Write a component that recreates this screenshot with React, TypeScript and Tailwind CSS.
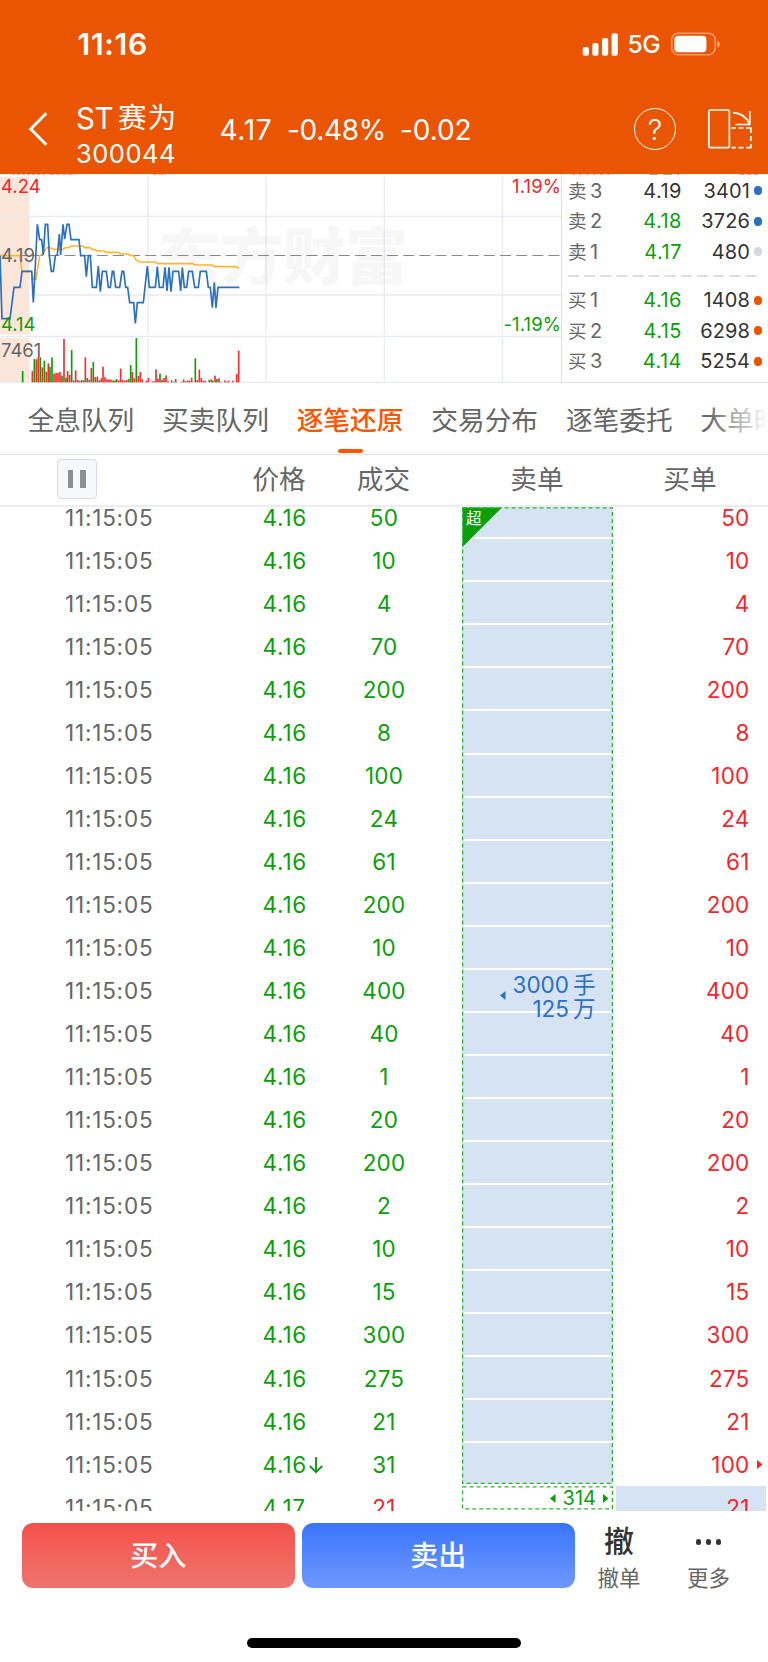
import React from 'react';

const FONT = "font-['Inter','Noto_Sans_CJK_SC',sans-serif]";

const PRICE_LINE =
  '0,272 6,461 30,461 42,367 60,367 66,319 95,319 100,412 106,300 112,178 119,224 125,224 130,270 136,178 143,178 148,272 154,319 160,319 166,272 172,270 178,207 182,270 189,178 194,222 201,178 207,178 213,224 237,224 242,272 254,272 259,335 265,272 271,272 277,367 289,367 295,303 301,380 307,319 319,319 325,367 331,367 337,319 341,319 347,367 359,367 366,319 371,319 377,367 383,367 389,413 401,413 406,475 412,413 430,413 442,303 448,367 466,367 472,305 478,367 489,367 495,307 501,378 507,307 513,380 519,319 536,319 542,378 547,308 553,367 560,367 566,319 577,319 584,367 595,367 601,319 619,319 625,367 631,367 637,428 643,352 648,428 654,367 718,367';

const AVG_LINE =
  '0,272 60,272 66,319 95,319 101,343 108,343 119,272 128,266 142,247 154,249 160,253 190,253 196,248 207,247 213,243 248,243 254,248 270,248 277,253 284,254 290,258 313,258 319,262 354,262 360,266 384,267 390,271 401,272 408,285 419,291 466,291 472,296 578,296 585,300 637,300 643,305 707,305 717,310';

type Bar = [number, number, 'r' | 'g'];
const BARS: Bar[] = [
  [68, 618, 'g'], [97, 618, 'r'], [103, 582, 'g'], [109, 583, 'r'], [115, 576, 'r'], [121, 577, 'g'],
  [127, 607, 'r'], [133, 587, 'g'], [139, 620, 'r'], [145, 595, 'r'], [150, 606, 'g'], [156, 577, 'g'],
  [162, 626, 'r'], [168, 624, 'r'], [174, 624, 'r'], [180, 621, 'r'], [186, 632, 'g'], [192, 522, 'r'],
  [198, 638, 'g'], [203, 618, 'r'], [209, 630, 'r'], [215, 555, 'g'], [221, 646, 'r'], [227, 616, 'r'],
  [233, 645, 'r'], [239, 647, 'r'], [245, 645, 'g'], [251, 646, 'r'], [256, 577, 'r'], [262, 639, 'g'],
  [268, 644, 'r'], [274, 609, 'r'], [280, 591, 'g'], [286, 636, 'r'], [292, 635, 'r'], [298, 646, 'g'],
  [304, 640, 'r'], [309, 605, 'r'], [315, 637, 'r'], [321, 643, 'r'], [327, 643, 'r'], [333, 644, 'r'],
  [339, 646, 'g'], [345, 646, 'r'], [350, 642, 'g'], [356, 646, 'r'], [362, 611, 'r'], [368, 645, 'r'],
  [374, 647, 'r'], [380, 645, 'r'], [386, 642, 'g'], [392, 600, 'g'], [397, 621, 'r'], [403, 640, 'r'],
  [409, 519, 'g'], [415, 633, 'r'], [421, 621, 'r'], [427, 643, 'r'], [439, 647, 'r'], [445, 639, 'r'],
  [457, 649, 'r'], [463, 649, 'r'], [468, 613, 'r'], [474, 641, 'r'], [480, 626, 'g'], [486, 644, 'r'],
  [492, 639, 'r'], [498, 631, 'r'], [504, 648, 'r'], [515, 646, 'g'], [521, 650, 'r'], [527, 642, 'r'],
  [545, 650, 'g'], [551, 643, 'r'], [557, 649, 'g'], [563, 646, 'r'], [569, 647, 'r'], [575, 638, 'r'],
  [586, 580, 'g'], [592, 645, 'r'], [598, 614, 'r'], [604, 639, 'r'], [610, 647, 'r'], [616, 647, 'r'],
  [628, 645, 'g'], [634, 643, 'r'], [639, 647, 'g'], [645, 632, 'r'], [651, 642, 'g'], [657, 640, 'r'],
  [663, 650, 'r'], [675, 646, 'r'], [681, 650, 'r'], [686, 647, 'r'], [698, 647, 'r'], [710, 627, 'r'],
  [716, 557, 'r'],
];

const ROWS: { qty: string; buy: string; price?: string; down?: boolean; arrow?: boolean; red?: boolean }[] = [
  { qty: '50', buy: '50' }, { qty: '10', buy: '10' }, { qty: '4', buy: '4' }, { qty: '70', buy: '70' },
  { qty: '200', buy: '200' }, { qty: '8', buy: '8' }, { qty: '100', buy: '100' }, { qty: '24', buy: '24' },
  { qty: '61', buy: '61' }, { qty: '200', buy: '200' }, { qty: '10', buy: '10' }, { qty: '400', buy: '400' },
  { qty: '40', buy: '40' }, { qty: '1', buy: '1' }, { qty: '20', buy: '20' }, { qty: '200', buy: '200' },
  { qty: '2', buy: '2' }, { qty: '10', buy: '10' }, { qty: '15', buy: '15' }, { qty: '300', buy: '300' },
  { qty: '275', buy: '275' }, { qty: '21', buy: '21' }, { qty: '31', buy: '100', down: true, arrow: true },
  { qty: '21', buy: '21', price: '4.17', red: true },
];

function StatusBar() {
  return (
    <div className="flex h-[87px] items-center justify-between pl-[77.500px] pr-[48.500px] text-white">
      <span className="text-[30px] font-semibold leading-none tracking-[0.700px]">11:16</span>
      <div className="flex items-center">
        <svg width="36" height="24" viewBox="0 0 36 24" fill="#fff">
          <rect x="0.7" y="15" width="6.2" height="8.7" rx="2" />
          <rect x="10.3" y="11" width="6.2" height="12.7" rx="2" />
          <rect x="20" y="6" width="6.2" height="17.7" rx="2" />
          <rect x="29.6" y="1.2" width="6.2" height="22.5" rx="2" />
        </svg>
        <span className="ml-[9.5px] w-[42px] pt-[2px] text-[24.5px] font-medium leading-none tracking-[-0.3px]">5G</span>
        <svg width="50" height="24" viewBox="0 0 50 24">
          <rect x="1.7" y="1.2" width="43.5" height="21.5" rx="6.5" fill="none" stroke="#fff" strokeOpacity="0.42" strokeWidth="1.5" />
          <rect x="4.4" y="3.7" width="32" height="16.6" rx="4" fill="#fff" />
          <path d="M47.3 8.700c3.2 1.2 3.2 6 0 7.2z" fill="#fff" fillOpacity="0.5" />
        </svg>
      </div>
    </div>
  );
}

function TitleBar() {
  return (
    <div className="flex h-[87px] items-start text-white">
      <svg className="mt-[23px] ml-[26px]" width="24" height="38" viewBox="0 0 24 38" fill="none" stroke="#fff" strokeWidth="3">
        <path d="M20.3 3.2 4.8 19l15.500 15.800" />
      </svg>
      <div className="ml-[26px] mt-[14px] w-[143.500px]">
        <div className="flex h-[35px] items-center gap-[5px] leading-none">
          <span className="text-[29.500px] tracking-[-0.500px]">ST</span>
          <span className="text-[28.500px] tracking-[1.200px]">赛为</span>
        </div>
        <div className="h-[35px] text-[25.5px] leading-[35px] tracking-[0.500px]">300044</div>
      </div>
      <div className="mt-[26px] flex h-[34px] items-center text-[28px] leading-none">
        <span className="w-[67.500px] tracking-[0.700px]">4.17</span>
        <span className="w-[113px] tracking-[-0.3px]">-0.48%</span>
        <span className="w-[100px] tracking-[-0.1px]">-0.02</span>
      </div>
      <div className="ml-auto mt-[21px] mr-[92px] flex size-[42px] shrink-0 items-center justify-center rounded-full border-[1.6px] border-white text-[29px] font-light leading-none">?</div>
      <svg className="absolute left-[706px] top-[107px]" width="48" height="44" viewBox="0 0 48 44" fill="none" stroke="#fff" strokeWidth="1.7">
        <rect x="2.8" y="3" width="20.600" height="37.600" rx="1.500" />
        <path d="M27 5.600c8 .4 13.500 4.400 16.500 11.300M43.800 4v13.600M29.300 17.500h15" />
        <path d="M25.500 21h4.500m2.500 0h5m2.500 0h4.800v5m0 3v5m0 3v3.700h-4.500m-2.700 0h-5m-2.600 0h-4.500" />
      </svg>
    </div>
  );
}

function Chart() {
  return (
    <div className="relative h-full w-[561px] shrink-0 overflow-hidden leading-none">
      <svg className="absolute inset-0" width="561" height="209" viewBox="0 174 561 209">
        <rect x="0" y="177" width="29.500" height="157.500" fill="#fce5d9" />
        <rect x="0" y="338" width="29.500" height="44.500" fill="#fce5d9" />
        <g stroke="#e7eaf1" strokeWidth="1.300">
          {[148, 266, 384.3, 502.5].map((x) => (
            <path key={x} d={`M${x} 177V334.500M${x} 338V382`} />
          ))}
          <path d="M0 216.300H561M0 295H561M0 336.500H561M0 382.500H561" />
        </g>
        <path d="M12 174.500h35" stroke="#bbb" strokeDasharray="3 2" />
        <path d="M50 174.500h25M153 174.500h13" stroke="#f9a9a0" strokeDasharray="4 2" />
      </svg>
      <div className="absolute left-[158px] top-[52px] whitespace-nowrap text-[62.500px] font-black text-[#777777]/[0.06]">东方财富</div>
      <svg className="absolute inset-0" width="561" height="209" viewBox="0 174 561 209">
        <path d="M0 255.500H561" stroke="#888" strokeWidth="1.200" strokeDasharray="11 5.130" />
        <g transform="translate(0 165) scale(0.33333)" fill="none" strokeWidth="5" strokeLinejoin="miter">
          <polyline points={AVG_LINE} stroke="#fdb62f" />
          <polyline points={PRICE_LINE} stroke="#2b70c1" strokeMiterlimit="2" />
          {BARS.map(([x, y, c]) => (
            <rect key={x} x={x - 2.5} y={y} width="5" height={652 - y} fill={c === 'r' ? '#f82c2c' : '#0aa00a'} />
          ))}
        </g>
      </svg>
      <span className="absolute left-[1px] top-[3px] text-[18.500px] text-[#f4252b]">4.24</span>
      <span className="absolute left-[1px] top-[72px] text-[18.500px] text-[#666]">4.19</span>
      <span className="absolute left-[1px] top-[141px] text-[18.500px] text-[#0a9f0a]">4.14</span>
      <span className="absolute right-0 top-[3px] text-[18.500px] tracking-[0.100px] text-[#f4252b]">1.19%</span>
      <span className="absolute right-0 top-[141px] text-[18.500px] tracking-[0.100px] text-[#0a9f0a]">-1.19%</span>
      <span className="absolute left-[1px] top-[167px] text-[18.500px] text-[#666]">7461</span>
    </div>
  );
}

function Level({ side, n, price, qty, dot, dark }: { side: string; n: string; price: string; qty: string; dot: string; dark?: boolean }) {
  return (
    <div className="flex h-[30.500px] items-center text-[20px] leading-none">
      <span className="w-[22px] shrink-0 text-[18.500px] text-[#666]">{side}</span>
      <span className="w-[14px] shrink-0 text-[#666]">{n}</span>
      <span className={`w-[78px] shrink-0 text-right tracking-[0.500px] ${dark ? 'text-[#333]' : 'text-[#0a9f0a]'}`}>{price}</span>
      <span className="w-[68px] shrink-0 text-right tracking-[0.100px] text-[#333]">{qty}</span>
      <i className={`ml-[3.500px] size-[8.600px] shrink-0 rounded-full ${dot}`} />
    </div>
  );
}

function OrderBook() {
  return (
    <div className="relative flex-1 border-b border-l border-[#dde0e8] pl-[6px] pt-[1.500px]">
      <svg className="absolute left-[10px] top-0" width="190" height="1">
        <path d="M0 .5h38" stroke="#bbb" strokeDasharray="3 4" />
        <path d="M77 .5h30" stroke="#7fcc7f" strokeDasharray="9 5" />
        <path d="M168 .5h21" stroke="#f99" strokeDasharray="4 3" />
      </svg>
      <Level side="卖" n="3" price="4.19" qty="3401" dot="bg-[#2b70c1]" dark />
      <Level side="卖" n="2" price="4.18" qty="3726" dot="bg-[#2b70c1]" />
      <Level side="卖" n="1" price="4.17" qty="480" dot="bg-[#d4d7df]" />
      <svg className="block" width="190" height="18">
        <path d="M0 9H189" stroke="#d0d3db" strokeWidth="1.700" strokeDasharray="11 5.130" />
      </svg>
      <Level side="买" n="1" price="4.16" qty="1408" dot="bg-[#ea5504]" />
      <Level side="买" n="2" price="4.15" qty="6298" dot="bg-[#ea5504]" />
      <Level side="买" n="3" price="4.14" qty="5254" dot="bg-[#ea5504]" />
    </div>
  );
}

function Tabs() {
  const tabs = ['全息队列', '买卖队列', '逐笔还原', '交易分布', '逐笔委托', '大单时间'];
  return (
    <div className="relative h-[71.500px] overflow-hidden border-b border-[#e3e3e6]">
      <div className="flex gap-[27.800px] whitespace-nowrap pl-[27.500px] text-[26.700px] leading-[74px] text-[#666]">
        {tabs.map((t) => (
          <div key={t} className={`relative w-[106.800px] shrink-0 ${t === '逐笔还原' ? 'font-medium text-[#ff5500]' : ''}`}>
            {t}
            {t === '逐笔还原' && <i className="absolute left-[41px] top-[66px] h-[4px] w-[25px] rounded-full bg-[#ff5500]" />}
          </div>
        ))}
      </div>
      <div className="absolute right-0 top-0 h-[70px] w-[60px] bg-gradient-to-r from-white/0 to-white" />
    </div>
  );
}

function ColumnHeader() {
  return (
    <div className="flex h-[52px] items-center border-b-2 border-[#ededf0] text-[26.600px] leading-none text-[#666]">
      <div className="ml-[57px] -mt-[1px] flex size-[39.500px] items-center justify-center gap-[7px] rounded-[4px] border border-[#d8dae3] bg-[#f6f8fb]">
        <i className="h-[18.500px] w-[5.500px] bg-[#8d8d94]" />
        <i className="h-[18.500px] w-[5.500px] bg-[#8d8d94]" />
      </div>
      <span className="ml-[156px] w-[104.300px]">价格</span>
      <span className="w-[153.500px]">成交</span>
      <span className="w-[153px]">卖单</span>
      <span>买单</span>
    </div>
  );
}

function Trades() {
  return (
    <div className="h-[1004.200px] overflow-hidden">
      <div className="flex items-start text-[22.500px] leading-none">
        <div className="-mt-[10.200px] w-[462px]">
          {ROWS.map((r, i) => (
            <div key={i} className="flex h-[43.050px] items-center">
              <span className="w-[196px] pl-[65px] tracking-[0.800px] text-[#666]">11:15:05</span>
              <span className="flex w-[134px] items-center pl-[66.500px] tracking-[0.800px] text-[#0a9f0a]">
                {r.price ?? '4.16'}
                {r.down && (
                  <svg className="ml-[1px] shrink-0" width="16" height="18" viewBox="0 0 16 18" fill="none" stroke="#0a9f0a" strokeWidth="1.900">
                    <path d="M8 1v15M1.800 10 8 16.200 14.200 10" />
                  </svg>
                )}
              </span>
              <span className={`w-[108px] text-center tracking-[0.200px] ${r.red ? 'text-[#f4252b]' : 'text-[#0a9f0a]'}`}>{r.qty}</span>
            </div>
          ))}
        </div>
        <div className="w-[151px] pt-[0.500px]">
          <div className="relative h-[977px] bg-[#d6e3f3]">
            <div className="h-[32.300px] border-b-2 border-white" />
            {ROWS.slice(1, 22).map((_, i) => (
              <div key={i} className="h-[43.050px] border-b-2 border-white" />
            ))}
            <svg className="absolute inset-0" width="151" height="977" fill="none">
              <path d="M.500 .500H40L.500 40z" fill="#0aa00a" />
              <rect x="0.600" y="0.800" width="149.800" height="975.500" stroke="#2db52d" strokeWidth="1.300" strokeDasharray="4 3" />
            </svg>
            <span className="absolute left-[4px] top-[4px] text-[15.500px] text-white">超</span>
            <div className="absolute right-[17.500px] top-[466px] text-right text-[22.500px] leading-[23.500px] text-[#2b70c1]">
              <div>3000<span className="ml-[4px]">手</span></div>
              <div>125<span className="ml-[4px]">万</span></div>
            </div>
            <svg className="absolute left-[37.500px] top-[484px]" width="6" height="9"><path d="M5.500 0v9L0 4.500z" fill="#2b70c1" /></svg>
          </div>
          <div className="relative mt-[2px] flex h-[24px] items-center justify-end pr-[4px]">
            <svg className="absolute inset-0" width="151" height="24" fill="none">
              <rect x="0.600" y="0.800" width="149.800" height="22" stroke="#2db52d" strokeWidth="1.300" strokeDasharray="4 3" />
            </svg>
            <svg width="6" height="9"><path d="M5.500 0v9L0 4.500z" fill="#0a9f0a" /></svg>
            <span className="mx-[7px] text-[20px] text-[#0a9f0a]">314</span>
            <svg width="6" height="9"><path d="M0 0v9L5.500 4.500z" fill="#0a9f0a" /></svg>
          </div>
        </div>
        <div className="-mt-[10.200px] ml-[3px] w-[150px]">
          {ROWS.map((r, i) => (
            <div key={i} className={`flex h-[43.050px] items-center justify-end tracking-[0.200px] text-[#f4252b] ${r.red ? 'bg-[#d6e3f3]' : ''}`}>
              {r.buy}
              <div className="flex w-[16.500px] shrink-0 pl-[7px]">
                {r.arrow && <svg width="6" height="9"><path d="M0 0v9L5.500 4.500z" fill="#f4252b" /></svg>}
              </div>
            </div>
          ))}
        </div>
      </div>
    </div>
  );
}

function BottomBar() {
  return (
    <div className="flex items-start pl-[22px] pt-[12.500px] leading-none">
      <div className="flex h-[64.500px] w-[272.500px] items-center justify-center rounded-[11px] bg-gradient-to-b from-[#f4504a] to-[#ee746d] pt-[2px] text-[28px] font-medium text-white">买入</div>
      <div className="ml-[7.500px] flex h-[64.500px] w-[272.500px] items-center justify-center rounded-[11px] bg-gradient-to-b from-[#3974fb] to-[#6e98ff] pt-[2px] text-[28px] font-medium text-white">卖出</div>
      <div className="flex w-[89px] flex-col items-center">
        <span className="mt-[3px] text-[30px] font-medium text-[#333]">撤</span>
        <span className="mt-[12px] text-[21.500px] text-[#666]">撤单</span>
      </div>
      <div className="flex w-[90px] flex-col items-center">
        <div className="mt-[16px] flex gap-[4.800px]">
          <i className="size-[5.400px] rounded-full bg-[#333]" />
          <i className="size-[5.400px] rounded-full bg-[#333]" />
          <i className="size-[5.400px] rounded-full bg-[#333]" />
        </div>
        <span className="mt-[23.500px] text-[21.500px] text-[#666]">更多</span>
      </div>
    </div>
  );
}

export default function App() {
  return (
    <div className={`relative flex h-[1662px] w-[768px] flex-col overflow-hidden bg-white ${FONT}`}>
      <header className="h-[174px] shrink-0 bg-[#ea5504]">
        <StatusBar />
        <TitleBar />
      </header>
      <section className="flex h-[209px] shrink-0">
        <Chart />
        <OrderBook />
      </section>
      <Tabs />
      <ColumnHeader />
      <Trades />
      <BottomBar />
      <div className="mx-auto mt-auto mb-[14.500px] h-[9.500px] w-[274.500px] rounded-full bg-black" />
    </div>
  );
}
